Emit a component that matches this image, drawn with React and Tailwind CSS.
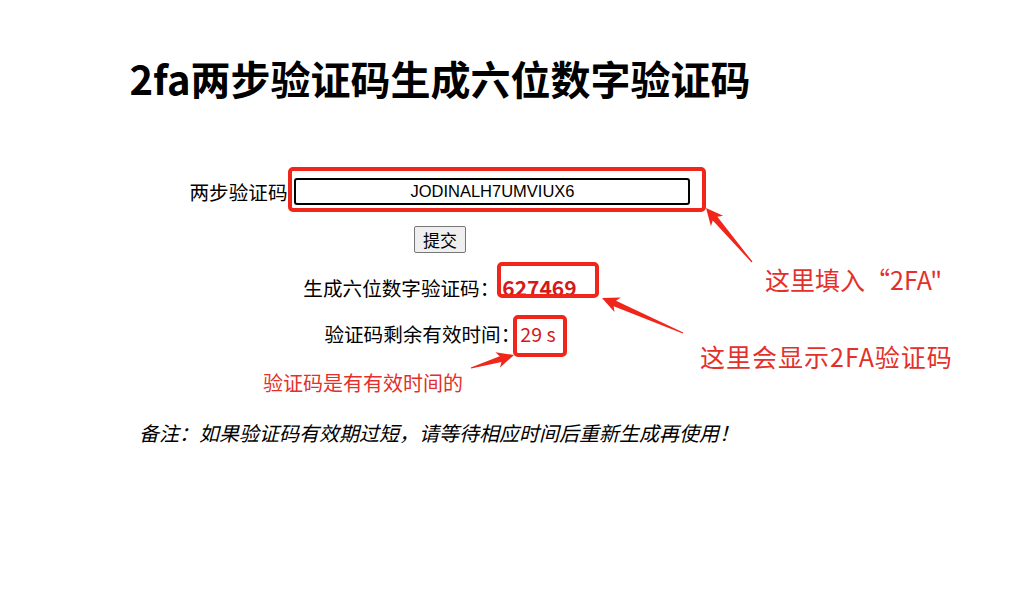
import React from 'react'

// arrow polygon: tip -> tail, with a wedge head and tapering shaft
const arrowPoints = (tx, ty, ex, ey) => {
    const len = Math.hypot(ex - tx, ey - ty)
    const dx = (ex - tx) / len
    const dy = (ey - ty) / len
    const nx = -dy
    const ny = dx
    const p = (along, side) => `${tx + dx * along + nx * side},${ty + dy * along + ny * side}`
    return [
        p(0, 0),
        p(17, 8),
        p(14, 3),
        p(len, 0.6),
        p(len, -0.6),
        p(14, -3),
        p(17, -8),
    ].join(' ')
}

const App = () => {
    return (
        <div className="relative w-[1022px] h-[589px] bg-white overflow-hidden text-black font-['Noto_Sans_CJK_SC',sans-serif]">
            <div className="w-[880px] flex flex-col items-center pt-[56px]">
                <h1 className="text-[40px] leading-[44px] font-bold">
                    2fa两步验证码生成六位数字验证码
                </h1>

                <div className="mt-[78px] flex items-center gap-[7px] h-[27px]">
                    <span className="text-[19.6px] leading-none">两步验证码</span>
                    <input
                        readOnly
                        value="JODINALH7UMVIUX6"
                        className="w-[396px] h-[27px] border-2 border-black rounded-[3px] text-center text-[16.5px] font-['Liberation_Sans',sans-serif] outline-none"
                    />
                </div>

                <button className="mt-[21px] w-[52px] h-[27px] bg-[#efefef] border border-[#767676] rounded-[2px] text-[17px] leading-none">
                    提交
                </button>

                <div className="mt-[20px] h-[30px] flex items-center text-[19.6px]">
                    <span>生成六位数字验证码：</span>
                    <span className="text-[#d41a1a] font-bold text-[21px] pl-[3px]">627469</span>
                </div>

                <div className="mt-[16px] h-[30px] flex items-center text-[19.6px]">
                    <span>验证码剩余有效时间：</span>
                    <span className="text-[#d41a1a]">29 s</span>
                </div>

                <p className="mt-[69px] pr-[2px] italic text-[20px] leading-[30px]">
                    备注：如果验证码有效期过短，请等待相应时间后重新生成再使用！
                </p>
            </div>

            {/* annotation marks */}
            <svg className="absolute inset-0 pointer-events-none" width="1022" height="589">
                <rect x="290" y="169" width="414" height="41" rx="3" fill="none" stroke="#f0261b" strokeWidth="4" />
                <rect x="499" y="264" width="98" height="32" rx="3" fill="none" stroke="#f0261b" strokeWidth="4" />
                <rect x="515" y="317" width="50" height="38" rx="3" fill="none" stroke="#f0261b" strokeWidth="4" />
                <polygon points={arrowPoints(706, 208, 752, 262)} fill="#f0261b" />
                <polygon points={arrowPoints(602, 298, 683, 333)} fill="#f0261b" />
                <polygon points={arrowPoints(514, 355, 471, 368)} fill="#f0261b" />
            </svg>

            <div className="absolute left-[765px] top-[266px] text-[25px] leading-[26px] text-[#e3302a]">这里填入“2FA"</div>
            <div className="absolute left-[700px] top-[343px] text-[25px] leading-[26px] tracking-[1px] text-[#e3302a]">这里会显示2FA验证码</div>
            <div className="absolute left-[263px] top-[372px] text-[20px] leading-[22px] text-[#e3302a]">验证码是有有效时间的</div>
        </div>
    )
}

export default App
